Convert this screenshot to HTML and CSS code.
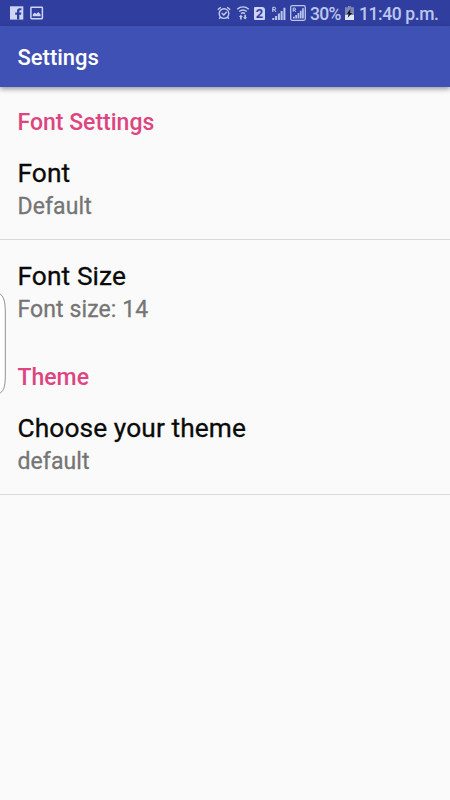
FILE: index.html
```
<!DOCTYPE html>
<html lang="en">
<head>
    <meta charset="UTF-8">
    <meta name="viewport" content="width=device-width, initial-scale=1.0">
    <title>Settings</title>
    <link rel="stylesheet" href="styles.css">
</head>
<body>
    <div class="screen">
        <div class="status-bar">
            <svg class="icon-facebook" width="14" height="14" viewBox="0 0 14 14">
                <rect width="13.3" height="13.3" y=".3" fill="#cdd4f4"/>
                <path d="M7 13.6V8.7H5.2V6.5H7V5c0-1.9 1.1-2.8 2.8-2.8h1.6v2h-1c-.9 0-1.1.4-1.1 1.1v1.2h2.1L11 8.7H9.3v4.9z" fill="#303f9f"/>
            </svg>
            <svg class="icon-image" width="14" height="14" viewBox="0 0 14 14">
                <rect x=".9" y="1.2" width="11.5" height="11.5" rx=".6" fill="none" stroke="#cdd4f4" stroke-width="1.5"/>
                <path d="M2.8 10.2V8.5l2-2 1.5 1.4L8.2 6l2.4 2.5v1.7z" fill="#cdd4f4"/>
            </svg>
            <svg class="icon-alarm" width="14" height="14" viewBox="0 0 14 14">
                <g fill="none" stroke="#c5cdf0" stroke-width="1.4">
                    <circle cx="7" cy="7.6" r="4.8"/>
                    <path d="M.8 3.8l3-2.6M13.2 3.8l-3-2.6M4.7 7l2.1 2 3-3.2M3.5 11.2l-1.3 1.6M10.5 11.2l1.3 1.6"/>
                </g>
            </svg>
            <svg class="icon-wifi" width="14" height="14" viewBox="0 0 14 14">
                <g fill="none" stroke="#c5cdf0" stroke-width="1.4">
                    <path d="M1.2 3.2c3.5-3 8.1-3 11.6 0M3.2 5.5c2.3-1.9 5.3-1.9 7.6 0M5.1 7.6c1.1-.9 2.7-.9 3.8 0"/>
                </g>
                <path d="M4.9 8.8l2 2.3H5.7v2.5H4.1v-2.5H2.9zM9.1 13.6l-2-2.4h1.2V8.8h1.6v2.4h1.2z" fill="#c5cdf0"/>
            </svg>
            <div class="sim">2</div>
            <svg class="icon-signal" width="15" height="15" viewBox="0 0 15 15">
                <path d="M1.3 12h2v2h-2zM4.1 10h2v4h-2zM6.9 7.5h2V14h-2zM9.6 5h2v9h-2zM12.4 1.8h2V14h-2z" fill="#bdc6ee"/>
                <path d="M1.8 6V1.3h1.7c1.5 0 1.5 2.4 0 2.4H1.8M3.4 3.7L5 6" fill="none" stroke="#d3daf7" stroke-width="1"/>
            </svg>
            <svg class="icon-signal-box" width="16" height="16" viewBox="0 0 16 16">
                <rect x=".7" y=".7" width="14.6" height="14.6" rx="1.5" fill="none" stroke="#bdc6ee" stroke-width="1.3"/>
                <path d="M3 11.8h1.7v1.7H3zM5.3 10H7v3.5H5.3zM7.6 7.9h1.7v5.6H7.6zM9.9 5.7h1.7v7.8H9.900zM12.100 3.200h1.700v10.300h-1.700z" fill="#bdc6ee"/>
                <path d="M3.2 6.8V3h1.4c1.3 0 1.3 2 0 2H3.2M4.5 5l1.3 1.8" fill="none" stroke="#d3daf7" stroke-width=".9"/>
            </svg>
            <span class="percent">30%</span>
            <svg class="icon-battery" width="9" height="14" viewBox="0 0 9 14">
                <path d="M3 0h3v1.3h3V9H0V1.3h3z" fill="#7d86b8"/>
                <path d="M0 9h9v5H0z" fill="#dfe4f8"/>
                <path d="M5.6 3L1.8 7.8h2l-1.2 4L7.2 7H5z" fill="#111"/>
            </svg>
            <span class="clock">11:40 p.m.</span>
        </div>

        <div class="toolbar">
            <h1>Settings</h1>
        </div>

        <div class="settings">
            <h2>Font Settings</h2>
            <div class="item divider">
                <div class="item-title">Font</div>
                <div class="item-summary">Default</div>
            </div>
            <div class="item item-last">
                <div class="item-title">Font Size</div>
                <div class="item-summary">Font size: 14</div>
            </div>
            <h2>Theme</h2>
            <div class="item divider">
                <div class="item-title">Choose your theme</div>
                <div class="item-summary">default</div>
            </div>
        </div>

        <!-- edge panel handle -->
        <svg class="edge-handle" width="7" height="104" viewBox="0 0 7 104">
            <path d="M-1 1.5C3 3 5.3 8 5.3 20v64c0 12-2.3 16-6.3 17.5" fill="#fff" stroke="#858585" stroke-width=".9"/>
        </svg>
    </div>
</body>
</html>
```
FILE: styles.css
```
body {
    margin: 0;
    background: #fafafa;
    font-family: Roboto, "Liberation Sans", sans-serif;
}
.screen {
    position: relative;
    width: 450px;
    height: 800px;
    overflow: hidden;
    background: #fafafa;
}

/* status bar */
.status-bar {
    display: flex;
    align-items: center;
    height: 26px;
    padding: 0 0 0 10px;
    box-sizing: border-box;
    background: #303f9f;
    color: #bdc6ee;
    font-size: 17.5px;
    font-weight: 500;
    line-height: 26px;
    white-space: nowrap;
}
.status-bar svg {
    display: block;
    flex-shrink: 0;
}
.icon-image {
    margin-left: 6px;
}
.icon-alarm {
    margin-left: 173px;
}
.icon-wifi {
    margin-left: 5px;
}
.sim {
    flex-shrink: 0;
    width: 11px;
    height: 13px;
    margin-left: 4px;
    border-radius: 1px 3px 1px 1px;
    background: #cdd4f4;
    color: #303f9f;
    font-size: 13px;
    font-weight: 700;
    line-height: 13px;
    text-align: center;
}
.icon-signal {
    margin-left: 6px;
}
.icon-signal-box {
    margin-left: 4px;
}
.percent {
    width: 31px;
    margin: 1px 0 0 4px;
    letter-spacing: -0.7px;
}
.icon-battery {
    margin-left: 4px;
}
.clock {
    margin: 1px 0 0 5px;
    letter-spacing: -0.4px;
}

/* toolbar */
.toolbar {
    position: relative;
    display: flex;
    align-items: center;
    height: 61px;
    padding: 2px 17.5px 0;
    box-sizing: border-box;
    background: #3f51b5;
    box-shadow: 0 2px 5px rgba(0, 0, 0, 0.4);
}
h1 {
    margin: 0;
    color: #fff;
    font-size: 22px;
    font-weight: 500;
}

/* preference list */
h2 {
    height: 50px;
    margin: 0;
    padding: 20px 17.5px 0;
    box-sizing: border-box;
    color: #dd4580;
    font-size: 23px;
    font-weight: 500;
    line-height: 32px;
}
.item {
    height: 103px;
    padding: 20px 17.5px 0;
    box-sizing: border-box;
}
.item-last {
    height: 102px;
}
.divider {
    border-bottom: 1px solid #d9d9d9;
}
.item-title {
    color: #0a0a0a;
    font-size: 26.3px;
    font-weight: 400;
    line-height: 32px;
    letter-spacing: 0.1px;
    -webkit-text-stroke: 0.3px #0a0a0a;
}
.item-summary {
    color: #757575;
    font-size: 23px;
    font-weight: 400;
    line-height: 36px;
    letter-spacing: 0.1px;
    -webkit-text-stroke: 0.3px #757575;
}

.edge-handle {
    position: absolute;
    top: 292px;
    left: 0;
}
```
